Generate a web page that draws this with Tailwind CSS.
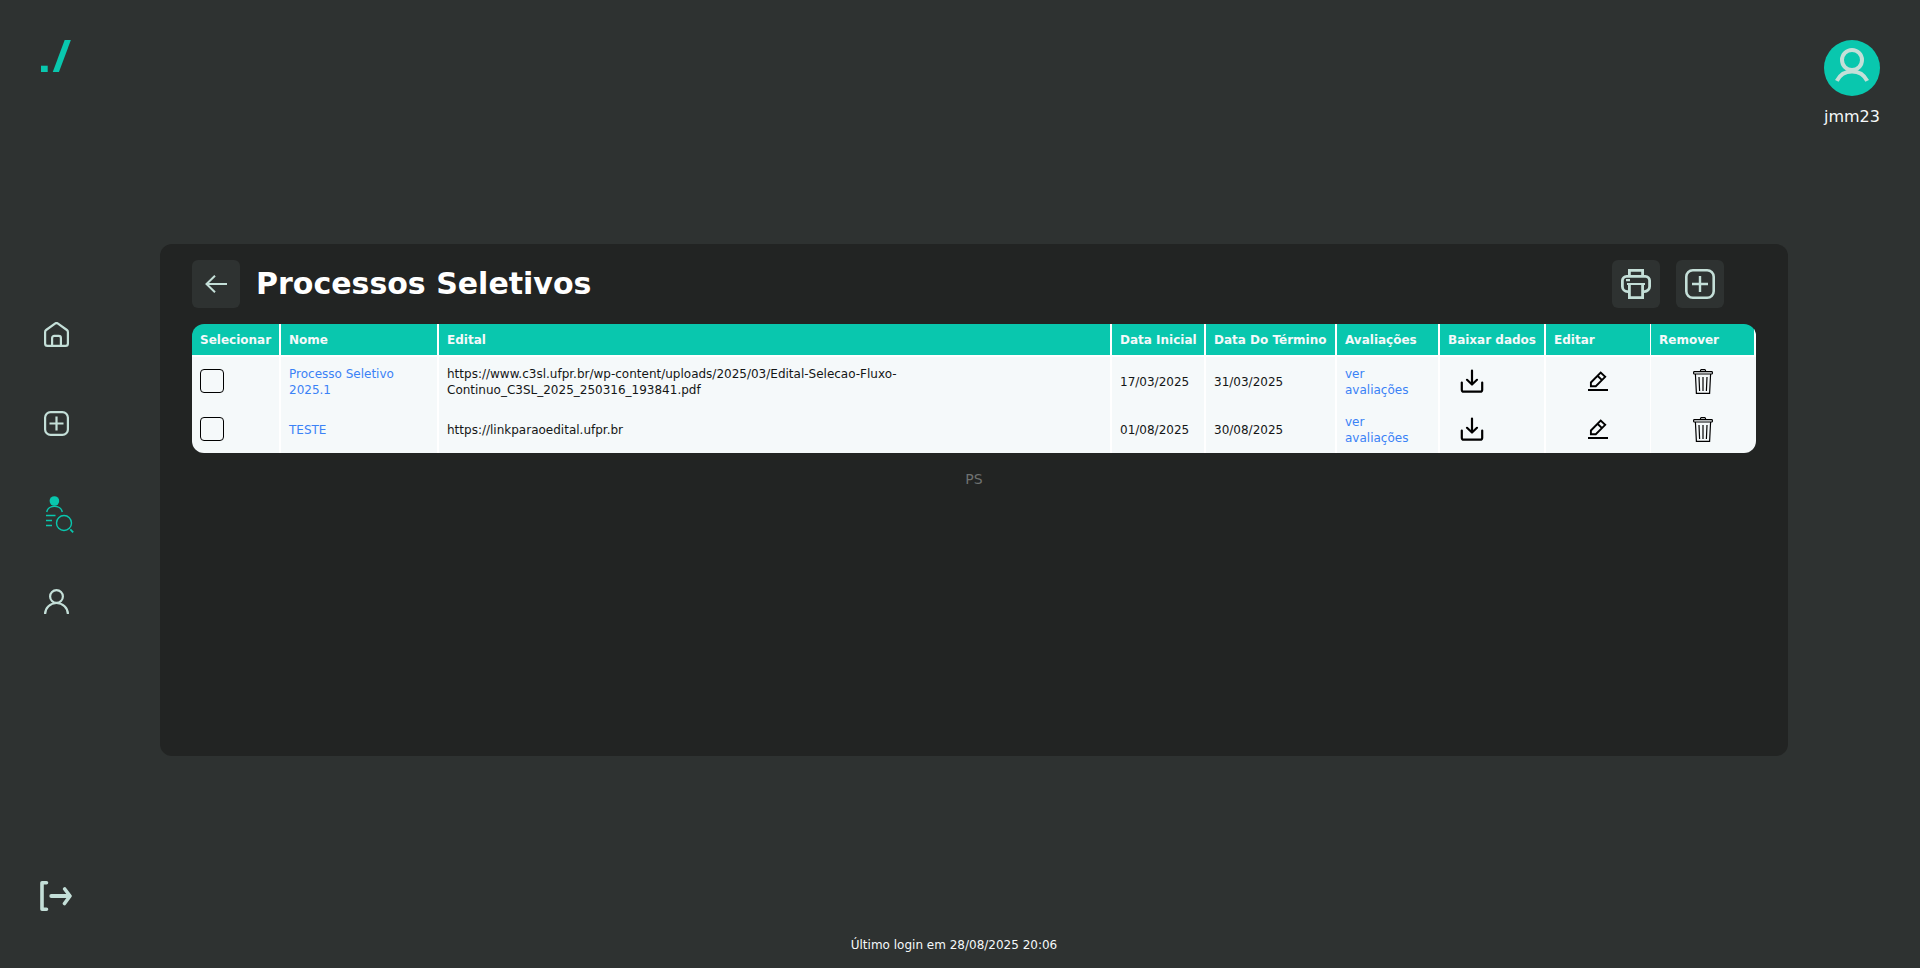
<!DOCTYPE html>
<html lang="pt-BR">
<head>
    <meta charset="UTF-8">
    <meta name="viewport" content="width=device-width, initial-scale=1.0">
    <title>Processos Seletivos</title>

    <script src="https://cdn.jsdelivr.net/npm/@tailwindcss/browser@4"></script>

    <style>
        body { font-family: 'DejaVu Sans', sans-serif; }
    </style>
</head>
<body class="bg-[#2e3231] text-[#f5f9fa]">

    <div class="flex min-h-screen">

        <!-- Menu lateral -->
        <aside class="flex flex-col items-center justify-between w-28 shrink-0 pt-10 pb-14 text-[#c4dfd8]">
            <a href="#" aria-label="Início">
                <svg class="w-8 h-8" viewBox="0 0 32 32" fill="#09c7ae">
                    <rect x="1" y="25.7" width="6.7" height="6.3"/>
                    <rect x="12.7" y="0" width="6.2" height="32" transform="translate(12 0) skewX(-20.5)"/>
                </svg>
            </a>

            <nav class="flex flex-col items-center gap-16 pb-4">
                <a href="#" aria-label="Home" class="flex items-center justify-center w-8 h-[25px]">
                    <svg class="w-[25px] h-[25px]" viewBox="0 0 25 25" fill="none" stroke="currentColor" stroke-width="2.2">
                        <path d="M3.5 23.9h18a2.4 2.4 0 0 0 2.4-2.4V10a2.5 2.5 0 0 0-1-2L14 1.6a2.5 2.5 0 0 0-3 0L2.1 8a2.5 2.5 0 0 0-1 2v11.5A2.4 2.4 0 0 0 3.5 23.9z"/>
                        <path d="M8.1 24v-8a2.2 2.2 0 0 1 2.2-2.2h4.4a2.2 2.2 0 0 1 2.2 2.2V24"/>
                    </svg>
                </a>
                <a href="#" aria-label="Adicionar" class="flex items-center justify-center w-8 h-[25px]">
                    <svg class="w-[25px] h-[25px]" viewBox="0 0 25 25" fill="none" stroke="currentColor" stroke-width="2.2">
                        <rect x="1.1" y="1.1" width="22.8" height="22.8" rx="5.5"/>
                        <path d="M12.5 5.5v14M5.5 12.5h14"/>
                    </svg>
                </a>
                <a href="#" aria-label="Processos seletivos" class="flex items-center justify-end w-9 h-[25px] text-[#09c7ae]">
                    <svg class="w-7 h-10 shrink-0" viewBox="0 -3 28 40" fill="none" stroke="currentColor" stroke-width="1.4">
                        <circle cx="8.4" cy="5" r="4.8" fill="currentColor" stroke="none"/>
                        <path d="M.7 16a7.9 6.9 0 0 1 15.6 0"/>
                        <path d="M0 19.5h9.5M0 24.5h6M0 29.5h6"/>
                        <circle cx="18" cy="27" r="7.5"/>
                        <path d="M24.3 33.3l2.9 3" stroke-width="1.8"/>
                    </svg>
                </a>
                <a href="#" aria-label="Perfil" class="flex items-center justify-center w-8 h-[25px]">
                    <svg class="w-[25px] h-[25px]" viewBox="0 0 25 25" fill="none" stroke="currentColor" stroke-width="2.2">
                        <circle cx="12.5" cy="7.5" r="6.4"/>
                        <path d="M1.1 25a11.4 11 0 0 1 22.8 0"/>
                    </svg>
                </a>
            </nav>

            <button type="button" aria-label="Sair">
                <svg class="w-8 h-8" viewBox="0 0 32 32" fill="none" stroke="currentColor" stroke-width="4" stroke-linecap="round" stroke-linejoin="round">
                    <path d="M6.5 2.8H2V29.2h4.5" stroke-width="3.6"/>
                    <path d="M11.3 16H29"/>
                    <path d="M24.7 9l5.3 7-5.5 7.5" stroke-width="3.6"/>
                </svg>
            </button>
        </aside>

        <div class="flex flex-col flex-1 min-w-0 pt-61 pb-[15px]">

            <!-- Painel -->
            <main class="ml-12 px-8 pt-4 min-h-[512px] bg-[#222423] rounded-xl">
                <header class="flex items-center gap-4 pr-8 mb-4">
                    <button type="button" aria-label="Voltar" class="flex items-center justify-center w-12 h-12 bg-[#2e3231] text-[#c4dfd8] rounded-md">
                        <svg class="w-[22px] h-[18px]" viewBox="0 0 22 18" fill="none" stroke="currentColor" stroke-width="2">
                            <path d="M1 9h21M10 .7L1.5 9l8.5 8.3"/>
                        </svg>
                    </button>
                    <h1 class="flex-1 text-3xl font-bold text-white">Processos Seletivos</h1>
                    <button type="button" aria-label="Imprimir" class="flex items-center justify-center w-12 h-12 bg-[#2e3231] text-[#c4dfd8] rounded-md">
                        <svg class="w-[30px] h-[30px]" viewBox="0 0 30 30" fill="none" stroke="currentColor" stroke-width="2.8">
                            <path d="M8.4 7V1.4h13.2V7"/>
                            <path d="M8 22.6H6.6a5.2 5.2 0 0 1-5.2-5.2V11.6a4.2 4.2 0 0 1 4.2-4.2h18.8a4.2 4.2 0 0 1 4.2 4.2v5.8a5.2 5.2 0 0 1-5.2 5.2H22"/>
                            <path d="M8.4 15v13.6h13.2V15"/>
                            <path d="M6 15h18M5 11.2h4" stroke-width="2.2"/>
                        </svg>
                    </button>
                    <button type="button" aria-label="Novo processo" class="flex items-center justify-center w-12 h-12 bg-[#2e3231] text-[#c4dfd8] rounded-md">
                        <svg class="w-[30px] h-[30px]" viewBox="0 0 30 30" fill="none" stroke="currentColor" stroke-width="2.6">
                            <rect x="1.3" y="1.3" width="27.4" height="27.4" rx="6.5"/>
                            <path d="M15 7v16M7 15h16" stroke-width="2.4"/>
                        </svg>
                    </button>
                </header>

                <table class="w-full table-fixed border-separate border-spacing-0 rounded-xl overflow-hidden text-xs text-left">
                    <caption class="caption-bottom mt-4 text-sm text-center text-[#6f7271]">PS</caption>
                    <thead>
                        <tr class="h-[33px] whitespace-nowrap">
                            <th class="w-[89px] px-2 bg-[#09c7ae] border-r-2 border-b-2 border-white">Selecionar</th>
                            <th class="w-[158px] px-2 bg-[#09c7ae] border-r-2 border-b-2 border-white">Nome</th>
                            <th class="px-2 bg-[#09c7ae] border-r-2 border-b-2 border-white">Edital</th>
                            <th class="w-[94px] px-2 bg-[#09c7ae] border-r-2 border-b-2 border-white">Data Inicial</th>
                            <th class="w-[131px] px-2 bg-[#09c7ae] border-r-2 border-b-2 border-white">Data Do Término</th>
                            <th class="w-[103px] px-2 bg-[#09c7ae] border-r-2 border-b-2 border-white">Avaliações</th>
                            <th class="w-[106px] px-2 bg-[#09c7ae] border-r-2 border-b-2 border-white">Baixar dados</th>
                            <th class="w-[105px] px-2 bg-[#09c7ae] border-r border-b-2 border-white">Editar</th>
                            <th class="w-[105px] px-2 bg-[#09c7ae] border-r-2 border-b-2 border-white">Remover</th>
                        </tr>
                    </thead>
                    <tbody class="text-[#141616]">
                        <tr class="h-12">
                            <td class="px-2 bg-[#f5f9fa] border-r-2 border-white">
                                <input type="checkbox" aria-label="Selecionar Processo Seletivo 2025.1" class="block w-6 h-6 appearance-none border border-black rounded">
                            </td>
                            <td class="px-2 pt-0.5 bg-[#f5f9fa] border-r-2 border-white"><a href="#" class="text-[#3b82f6]">Processo Seletivo 2025.1</a></td>
                            <td class="px-2 pt-0.5 bg-[#f5f9fa] border-r-2 border-white">https://www.c3sl.ufpr.br/wp-content/uploads/2025/03/Edital-Selecao-Fluxo-<wbr>Continuo_C3SL_2025_250316_193841.pdf</td>
                            <td class="px-2 pt-0.5 bg-[#f5f9fa] border-r-2 border-white">17/03/2025</td>
                            <td class="px-2 pt-0.5 bg-[#f5f9fa] border-r-2 border-white">31/03/2025</td>
                            <td class="px-2 pt-0.5 bg-[#f5f9fa] border-r-2 border-white"><a href="#" class="text-[#3b82f6]">ver<br>avaliações</a></td>
                            <td class="pl-5 bg-[#f5f9fa] border-r-2 border-white">
                                <button type="button" aria-label="Baixar dados" class="block text-black">
                                    <svg class="w-6 h-6" viewBox="0 0 24 24" fill="none" stroke="currentColor" stroke-width="2.2" stroke-linecap="round" stroke-linejoin="round">
                                        <path d="M12 1.5V15M7 10.8l5 4.7 5-4.7"/>
                                        <path d="M1.8 13.5v7.2a2 2 0 0 0 2 2h16.4a2 2 0 0 0 2-2v-7.2"/>
                                    </svg>
                                </button>
                            </td>
                            <td class="bg-[#f5f9fa] border-r border-white">
                                <button type="button" aria-label="Editar" class="block mx-auto text-black">
                                    <svg class="w-5 h-[21px]" viewBox="0 0 20 21" fill="none" stroke="currentColor" stroke-width="1.9">
                                        <path d="M2.9 15.2v-3.7L12.7 1.5l4.5 4.3-9.4 9.4zM9.5 4.7l4.5 4.4"/>
                                        <path d="M0 19h20" stroke-width="2"/>
                                    </svg>
                                </button>
                            </td>
                            <td class="pr-0.5 bg-[#f5f9fa]">
                                <button type="button" aria-label="Remover" class="block mx-auto text-black">
                                    <svg class="w-5 h-[25px]" viewBox="0 0 20 25" fill="none" stroke="currentColor" stroke-width="1.2">
                                        <path d="M7.5 2.5v-1a.9.9 0 0 1 .9-.9h3.2a.9.9 0 0 1 .9.9v1"/>
                                        <rect x=".6" y="2.6" width="18.8" height="2.4" rx=".8"/>
                                        <path d="M2.4 5l1 19.4h13.2l1-19.4"/>
                                        <path d="M6 8l.6 14M10 8v14M14 8l-.6 14"/>
                                    </svg>
                                </button>
                            </td>
                        </tr>
                        <tr class="h-12">
                            <td class="px-2 bg-[#f5f9fa] border-r-2 border-white rounded-bl-xl">
                                <input type="checkbox" aria-label="Selecionar TESTE" class="block w-6 h-6 appearance-none border border-black rounded">
                            </td>
                            <td class="px-2 pt-0.5 bg-[#f5f9fa] border-r-2 border-white"><a href="#" class="text-[#3b82f6]">TESTE</a></td>
                            <td class="px-2 pt-0.5 bg-[#f5f9fa] border-r-2 border-white">https://linkparaoedital.ufpr.br</td>
                            <td class="px-2 pt-0.5 bg-[#f5f9fa] border-r-2 border-white">01/08/2025</td>
                            <td class="px-2 pt-0.5 bg-[#f5f9fa] border-r-2 border-white">30/08/2025</td>
                            <td class="px-2 pt-0.5 bg-[#f5f9fa] border-r-2 border-white"><a href="#" class="text-[#3b82f6]">ver<br>avaliações</a></td>
                            <td class="pl-5 bg-[#f5f9fa] border-r-2 border-white">
                                <button type="button" aria-label="Baixar dados" class="block text-black">
                                    <svg class="w-6 h-6" viewBox="0 0 24 24" fill="none" stroke="currentColor" stroke-width="2.2" stroke-linecap="round" stroke-linejoin="round">
                                        <path d="M12 1.5V15M7 10.8l5 4.7 5-4.7"/>
                                        <path d="M1.8 13.5v7.2a2 2 0 0 0 2 2h16.4a2 2 0 0 0 2-2v-7.2"/>
                                    </svg>
                                </button>
                            </td>
                            <td class="bg-[#f5f9fa] border-r border-white">
                                <button type="button" aria-label="Editar" class="block mx-auto text-black">
                                    <svg class="w-5 h-[21px]" viewBox="0 0 20 21" fill="none" stroke="currentColor" stroke-width="1.9">
                                        <path d="M2.9 15.2v-3.7L12.7 1.5l4.5 4.3-9.4 9.4zM9.5 4.7l4.5 4.4"/>
                                        <path d="M0 19h20" stroke-width="2"/>
                                    </svg>
                                </button>
                            </td>
                            <td class="pr-0.5 bg-[#f5f9fa] rounded-br-xl">
                                <button type="button" aria-label="Remover" class="block mx-auto text-black">
                                    <svg class="w-5 h-[25px]" viewBox="0 0 20 25" fill="none" stroke="currentColor" stroke-width="1.2">
                                        <path d="M7.5 2.5v-1a.9.9 0 0 1 .9-.9h3.2a.9.9 0 0 1 .9.9v1"/>
                                        <rect x=".6" y="2.6" width="18.8" height="2.4" rx=".8"/>
                                        <path d="M2.4 5l1 19.4h13.2l1-19.4"/>
                                        <path d="M6 8l.6 14M10 8v14M14 8l-.6 14"/>
                                    </svg>
                                </button>
                            </td>
                        </tr>
                    </tbody>
                </table>
            </main>

            <footer class="mt-auto pl-2 text-xs text-center">Último login em 28/08/2025 20:06</footer>
        </div>

        <!-- Usuário -->
        <div class="flex flex-col items-center w-[132px] shrink-0 pt-10 pl-9 pr-10">
            <svg class="w-14 h-14" viewBox="0 0 56 56" fill="none" stroke="#c4dfd8" stroke-width="4">
                <circle cx="28" cy="28" r="28" fill="#09c7ae" stroke="none"/>
                <circle cx="28" cy="20" r="10"/>
                <path d="M12.8 40.8a17 17 0 0 1 30.4 0"/>
            </svg>
            <span class="mt-[9px]">jmm23</span>
        </div>
    </div>

</body>
</html>
